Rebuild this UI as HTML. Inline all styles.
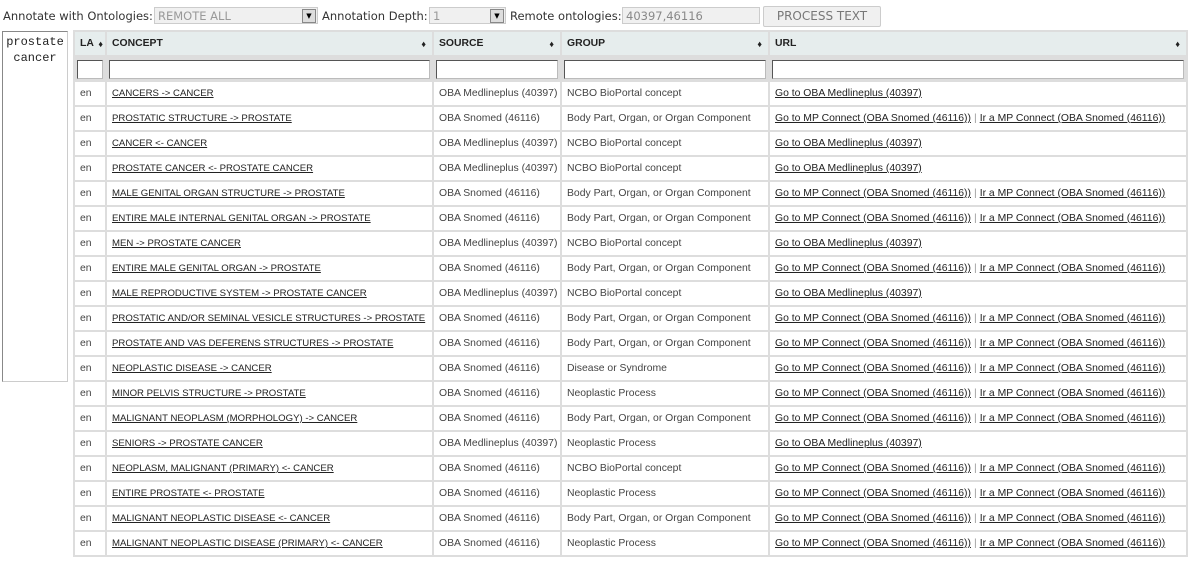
<!DOCTYPE html>
<html><head><meta charset="utf-8"><style>
body{margin:0;background:#fff;font-family:"Liberation Sans",sans-serif;font-size:10.4px;color:#444;width:1192px;height:562px;overflow:hidden;position:relative}
.top{position:absolute;left:3px;top:9px;font-family:"DejaVu Sans",sans-serif;font-size:11.5px;color:#333;white-space:nowrap}
.sel{position:absolute;top:7px;height:17px;background:#f0f0f0;border:1px solid #ccc;color:#999;font-family:"DejaVu Sans",sans-serif;font-size:11.5px;line-height:17px;padding-left:3px;box-sizing:border-box}
.arr{position:absolute;right:1px;top:1px;width:12px;height:12px;border:1px solid #888;background:#ddd;font-size:7px;line-height:12px;text-align:center;color:#000}
.btn{position:absolute;left:763px;top:6px;width:116px;height:19px;background:#f0f0f0;border:1px solid #ccc;border-radius:2px;color:#777;font-family:"DejaVu Sans",sans-serif;font-size:12px;line-height:19px;text-align:center}
.ta{position:absolute;left:2px;top:31px;width:66px;height:351px;border:1px solid #888;border-right-color:#ccc;border-bottom-color:#ccc;box-sizing:border-box;font-family:"Liberation Mono",monospace;font-size:12px;color:#222;text-align:center;line-height:16px;padding-top:2px}
table{position:absolute;left:73px;top:30px;border-collapse:collapse;table-layout:fixed;width:1113px}
tr{height:25px}
td,th{border:2px solid #ddd;padding:0 5px;text-align:left;white-space:nowrap;overflow:hidden;vertical-align:middle}
td:nth-child(2){font-size:9.6px}
th{background:#e6eded;font-weight:bold;color:#222;font-size:10.4px;position:relative}
th span{position:absolute;right:6px;top:7px;font-size:9px}
tr.f td{background:#ddd;padding:2px 2px 0 2px}
tr.f div{height:19px;background:#fff;border:1px solid #555;border-right-color:#bbb;border-bottom-color:#bbb;box-sizing:border-box}
a{color:#222;text-decoration:underline}
.sep{color:#999;padding:0 3px}
</style></head><body>
<div class="top">Annotate with Ontologies:</div>
<div class="sel" style="left:154px;width:164px">REMOTE ALL<div class="arr">▼</div></div>
<div class="top" style="left:322px">Annotation Depth:</div>
<div class="sel" style="left:429px;width:77px">1<div class="arr">▼</div></div>
<div class="top" style="left:510px">Remote ontologies:</div>
<div class="sel" style="left:622px;width:138px;color:#888">40397,46116</div>
<div class="btn">PROCESS TEXT</div>
<div class="ta">prostate<br>cancer</div>
<table>
<colgroup><col style="width:32px"><col style="width:327px"><col style="width:128px"><col style="width:208px"><col style="width:418px"></colgroup>
<tr><th>LA<span style="right:2px">♦</span></th><th>CONCEPT<span>♦</span></th><th>SOURCE<span>♦</span></th><th>GROUP<span>♦</span></th><th>URL<span>♦</span></th></tr>
<tr class="f"><td><div></div></td><td><div></div></td><td><div></div></td><td><div></div></td><td><div></div></td></tr>
<tr><td>en</td><td><a>CANCERS -&gt; CANCER</a></td><td>OBA Medlineplus (40397)</td><td>NCBO BioPortal concept</td><td><a>Go to OBA Medlineplus (40397)</a></td></tr>
<tr><td>en</td><td><a>PROSTATIC STRUCTURE -&gt; PROSTATE</a></td><td>OBA Snomed (46116)</td><td>Body Part, Organ, or Organ Component</td><td><a>Go to MP Connect (OBA Snomed (46116))</a><span class="sep">|</span><a>Ir a MP Connect (OBA Snomed (46116))</a></td></tr>
<tr><td>en</td><td><a>CANCER &lt;- CANCER</a></td><td>OBA Medlineplus (40397)</td><td>NCBO BioPortal concept</td><td><a>Go to OBA Medlineplus (40397)</a></td></tr>
<tr><td>en</td><td><a>PROSTATE CANCER &lt;- PROSTATE CANCER</a></td><td>OBA Medlineplus (40397)</td><td>NCBO BioPortal concept</td><td><a>Go to OBA Medlineplus (40397)</a></td></tr>
<tr><td>en</td><td><a>MALE GENITAL ORGAN STRUCTURE -&gt; PROSTATE</a></td><td>OBA Snomed (46116)</td><td>Body Part, Organ, or Organ Component</td><td><a>Go to MP Connect (OBA Snomed (46116))</a><span class="sep">|</span><a>Ir a MP Connect (OBA Snomed (46116))</a></td></tr>
<tr><td>en</td><td><a>ENTIRE MALE INTERNAL GENITAL ORGAN -&gt; PROSTATE</a></td><td>OBA Snomed (46116)</td><td>Body Part, Organ, or Organ Component</td><td><a>Go to MP Connect (OBA Snomed (46116))</a><span class="sep">|</span><a>Ir a MP Connect (OBA Snomed (46116))</a></td></tr>
<tr><td>en</td><td><a>MEN -&gt; PROSTATE CANCER</a></td><td>OBA Medlineplus (40397)</td><td>NCBO BioPortal concept</td><td><a>Go to OBA Medlineplus (40397)</a></td></tr>
<tr><td>en</td><td><a>ENTIRE MALE GENITAL ORGAN -&gt; PROSTATE</a></td><td>OBA Snomed (46116)</td><td>Body Part, Organ, or Organ Component</td><td><a>Go to MP Connect (OBA Snomed (46116))</a><span class="sep">|</span><a>Ir a MP Connect (OBA Snomed (46116))</a></td></tr>
<tr><td>en</td><td><a>MALE REPRODUCTIVE SYSTEM -&gt; PROSTATE CANCER</a></td><td>OBA Medlineplus (40397)</td><td>NCBO BioPortal concept</td><td><a>Go to OBA Medlineplus (40397)</a></td></tr>
<tr><td>en</td><td><a>PROSTATIC AND/OR SEMINAL VESICLE STRUCTURES -&gt; PROSTATE</a></td><td>OBA Snomed (46116)</td><td>Body Part, Organ, or Organ Component</td><td><a>Go to MP Connect (OBA Snomed (46116))</a><span class="sep">|</span><a>Ir a MP Connect (OBA Snomed (46116))</a></td></tr>
<tr><td>en</td><td><a>PROSTATE AND VAS DEFERENS STRUCTURES -&gt; PROSTATE</a></td><td>OBA Snomed (46116)</td><td>Body Part, Organ, or Organ Component</td><td><a>Go to MP Connect (OBA Snomed (46116))</a><span class="sep">|</span><a>Ir a MP Connect (OBA Snomed (46116))</a></td></tr>
<tr><td>en</td><td><a>NEOPLASTIC DISEASE -&gt; CANCER</a></td><td>OBA Snomed (46116)</td><td>Disease or Syndrome</td><td><a>Go to MP Connect (OBA Snomed (46116))</a><span class="sep">|</span><a>Ir a MP Connect (OBA Snomed (46116))</a></td></tr>
<tr><td>en</td><td><a>MINOR PELVIS STRUCTURE -&gt; PROSTATE</a></td><td>OBA Snomed (46116)</td><td>Neoplastic Process</td><td><a>Go to MP Connect (OBA Snomed (46116))</a><span class="sep">|</span><a>Ir a MP Connect (OBA Snomed (46116))</a></td></tr>
<tr><td>en</td><td><a>MALIGNANT NEOPLASM (MORPHOLOGY) -&gt; CANCER</a></td><td>OBA Snomed (46116)</td><td>Body Part, Organ, or Organ Component</td><td><a>Go to MP Connect (OBA Snomed (46116))</a><span class="sep">|</span><a>Ir a MP Connect (OBA Snomed (46116))</a></td></tr>
<tr><td>en</td><td><a>SENIORS -&gt; PROSTATE CANCER</a></td><td>OBA Medlineplus (40397)</td><td>Neoplastic Process</td><td><a>Go to OBA Medlineplus (40397)</a></td></tr>
<tr><td>en</td><td><a>NEOPLASM, MALIGNANT (PRIMARY) &lt;- CANCER</a></td><td>OBA Snomed (46116)</td><td>NCBO BioPortal concept</td><td><a>Go to MP Connect (OBA Snomed (46116))</a><span class="sep">|</span><a>Ir a MP Connect (OBA Snomed (46116))</a></td></tr>
<tr><td>en</td><td><a>ENTIRE PROSTATE &lt;- PROSTATE</a></td><td>OBA Snomed (46116)</td><td>Neoplastic Process</td><td><a>Go to MP Connect (OBA Snomed (46116))</a><span class="sep">|</span><a>Ir a MP Connect (OBA Snomed (46116))</a></td></tr>
<tr><td>en</td><td><a>MALIGNANT NEOPLASTIC DISEASE &lt;- CANCER</a></td><td>OBA Snomed (46116)</td><td>Body Part, Organ, or Organ Component</td><td><a>Go to MP Connect (OBA Snomed (46116))</a><span class="sep">|</span><a>Ir a MP Connect (OBA Snomed (46116))</a></td></tr>
<tr><td>en</td><td><a>MALIGNANT NEOPLASTIC DISEASE (PRIMARY) &lt;- CANCER</a></td><td>OBA Snomed (46116)</td><td>Neoplastic Process</td><td><a>Go to MP Connect (OBA Snomed (46116))</a><span class="sep">|</span><a>Ir a MP Connect (OBA Snomed (46116))</a></td></tr>
</table>
</body></html>
